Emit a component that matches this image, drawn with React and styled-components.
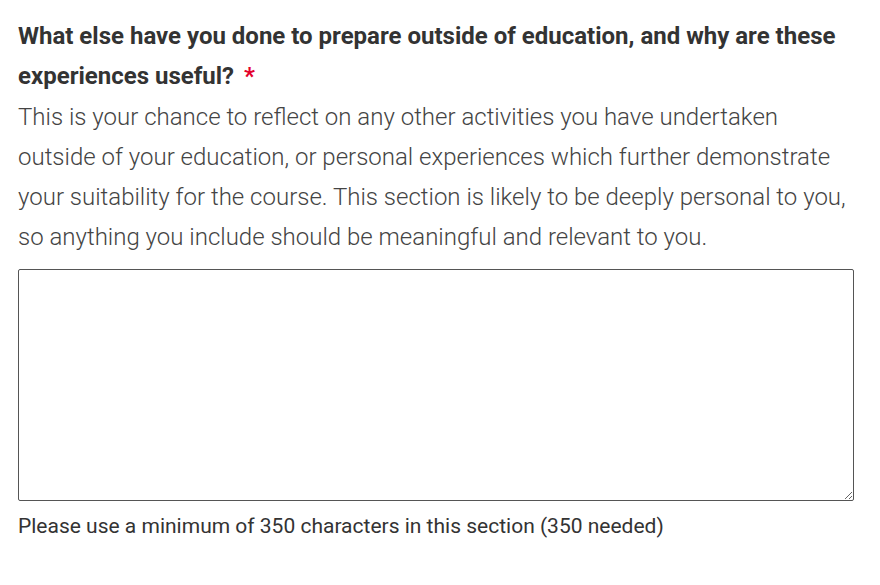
import React from "react";
import styled, { createGlobalStyle } from "styled-components";

const GlobalStyle = createGlobalStyle`
  body {
    margin: 0;
    background: #fff;
    font-family: Roboto, "Liberation Sans", sans-serif;
  }
`;

const Field = styled.div`
  padding: 16px 26px 0 18px;
  width: 836px;
`;

const Question = styled.label`
  display: block;
  font-size: 24px;
  font-weight: 700;
  line-height: 40px;
  color: #333;
`;

const Required = styled.span`
  color: #e4002b;
  margin-left: 10px;
`;

const Hint = styled.p`
  margin: 1px 0 0;
  font-size: 24px;
  font-weight: 300;
  line-height: 40px;
  color: #444;
`;

const Answer = styled.textarea`
  display: block;
  box-sizing: border-box;
  width: 836px;
  height: 232px;
  margin-top: 12px;
  border: 1px solid #555;
  border-radius: 2px;
  padding: 8px;
  font-family: inherit;
  font-size: 18px;
  resize: vertical;
  :focus {
    outline: none;
  }
`;

const Counter = styled.p`
  margin: 13px 0 0;
  font-size: 21px;
  line-height: 24px;
  color: #333;
`;

export default function App() {
  return (
    <>
      <GlobalStyle />
      <Field>
        <Question htmlFor="experience">
          What else have you done to prepare outside of education, and why are
          these experiences useful?
          <Required>*</Required>
        </Question>
        <Hint>
          This is your chance to reflect on any other activities you have
          undertaken outside of your education, or personal experiences which
          further demonstrate your suitability for the course. This section is
          likely to be deeply personal to you, so anything you include should
          be meaningful and relevant to you.
        </Hint>
        <Answer id="experience" name="experience" />
        <Counter>
          Please use a minimum of 350 characters in this section (350 needed)
        </Counter>
      </Field>
    </>
  );
}
